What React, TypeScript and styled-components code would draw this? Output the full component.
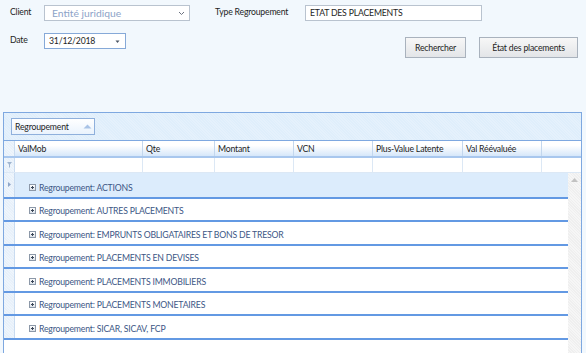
import React from "react";
import styled, { createGlobalStyle } from "styled-components";

const GlobalStyle = createGlobalStyle`
  html, body {
    margin: 0;
    padding: 0;
    background: #f2f8fd;
    font-family: Lato, "Liberation Sans", Arial, sans-serif;
    font-size: 8.7px;
    letter-spacing: -0.2px;
    color: #1e1e1e;
    overflow: hidden;
  }
`;

const Page = styled.div`
  width: 586px;
  height: 353px;
  display: flex;
  flex-direction: column;
`;

const FormArea = styled.div`
  height: 112px;
  display: flex;
  flex-direction: column;
  gap: 12px;
  padding: 5px 8px 0 10px;
  box-sizing: border-box;
`;

const FormRow = styled.div`
  display: flex;
  align-items: flex-start;
`;

const Label = styled.div<{ $w: number; $ml?: number }>`
  width: ${(p) => p.$w}px;
  margin-left: ${(p) => p.$ml ?? 0}px;
  line-height: 14px;
  white-space: nowrap;
`;

const Field = styled.div<{ $w: number; $focus?: boolean }>`
  width: ${(p) => p.$w}px;
  height: 16px;
  box-sizing: border-box;
  border: 1px solid ${(p) => (p.$focus ? "#86a9d8" : "#b9c3cf")};
  background: #fff;
  display: flex;
  align-items: center;
  padding: 0 4px 0 4px;
  line-height: 14px;
  white-space: nowrap;
`;

const Placeholder = styled.span`
  flex: 1;
  color: #8da3c8;
  padding-left: 3px;
  font-size: 10.3px;
  letter-spacing: 0;
`;

const FieldText = styled.span`
  flex: 1;
`;

const Chevron = styled.svg`
  width: 7px;
  height: 5px;
`;

const Buttons = styled.div`
  margin-left: auto;
  margin-top: 4px;
  display: flex;
  gap: 13px;
`;

const Button = styled.button<{ $w: number }>`
  width: ${(p) => p.$w}px;
  height: 21px;
  border: 1px solid #a9b2bd;
  background: linear-gradient(#f7f7f7, #e3e5e8);
  font-family: inherit;
  font-size: inherit;
  letter-spacing: inherit;
  color: #1e1e1e;
  padding: 0;
`;

const Grid = styled.div`
  margin: 0 4px 0 3px;
  flex: 1;
  border: 1px solid #7ea8e0;
  border-bottom: none;
  background: #fff;
  display: flex;
  flex-direction: column;
  overflow: hidden;
`;

const GroupPanel = styled.div`
  height: 28px;
  background: repeating-linear-gradient(45deg, #dfeefb 0 1px, #e5f1fc 1px 2px);
  border-bottom: 1px solid #7ea8e0;
  padding: 5px 0 0 7px;
  box-sizing: border-box;
`;

const GroupChip = styled.div`
  width: 84px;
  height: 17px;
  box-sizing: border-box;
  border: 1px solid #8fb0dc;
  background: linear-gradient(#ffffff, #eaf3fd);
  display: flex;
  align-items: center;
  justify-content: space-between;
  padding: 0 2px 0 3px;
`;

const Row = styled.div`
  display: flex;
`;

const HeaderRow = styled(Row)`
  height: 15px;
  background: linear-gradient(#ffffff 30%, #d6e7fa);
  border-bottom: 2px solid #a8c7ee;
`;

const FilterRow = styled(Row)`
  height: 14px;
  border-bottom: 1px solid #dce8f5;
`;

const Indicator = styled.div`
  width: 10px;
  flex: none;
  border-right: 1px solid #c9dbf0;
  background: repeating-linear-gradient(45deg, #e7f0fa 0 1px, #eef5fc 1px 2px);
  display: flex;
  align-items: center;
  justify-content: center;
`;

const HeadCell = styled.div<{ $w: number; $head?: boolean }>`
  width: ${(p) => p.$w}px;
  flex: none;
  box-sizing: border-box;
  border-right: 1px solid ${(p) => (p.$head ? "#c3d7ee" : "#dce8f5")};
  padding-left: 3px;
  line-height: 16px;
  white-space: nowrap;
`;

const Body = styled.div`
  flex: 1;
  display: flex;
`;

const Rows = styled.div`
  flex: 1;
  display: flex;
  flex-direction: column;
`;

const GroupRow = styled.div<{ $first?: boolean }>`
  height: ${(p) => (p.$first ? 25.5 : 23.5)}px;
  box-sizing: border-box;
  display: flex;
  border-bottom: 2px solid #6399e3;
`;

const GroupCell = styled.div<{ $active?: boolean }>`
  flex: 1;
  display: flex;
  align-items: flex-end;
  padding: 0 0 2px 14px;
  background: ${(p) => (p.$active ? "#dcecfc" : "#fff")};
  color: #3d5785;
  gap: 3px;
  line-height: 14px;
  white-space: nowrap;
`;

const PlusBox = styled.span`
  width: 7px;
  height: 7px;
  flex: none;
  box-sizing: border-box;
  border: 1px solid #8c98a8;
  background: linear-gradient(#fdfdfd, #dde3ea);
  margin-bottom: 4px;
  position: relative;
  &::before,
  &::after {
    content: "";
    position: absolute;
    background: #3a4658;
  }
  &::before {
    left: 1px;
    top: 2px;
    width: 3px;
    height: 1px;
  }
  &::after {
    left: 2px;
    top: 1px;
    width: 1px;
    height: 3px;
  }
`;

const Scrollbar = styled.div`
  width: 13px;
  flex: none;
  background: repeating-linear-gradient(45deg, #efefef 0 1px, #f6f6f6 1px 2px);
  display: flex;
  justify-content: center;
  padding-top: 5px;
  box-sizing: border-box;
`;

const columns = [
  { name: "ValMob", w: 128 },
  { name: "Qte", w: 72 },
  { name: "Montant", w: 79 },
  { name: "VCN", w: 79 },
  { name: "Plus-Value Latente", w: 90 },
  { name: "Val Réévaluée", w: 79 },
  { name: "", w: 52 },
];

const groups = [
  "ACTIONS",
  "AUTRES PLACEMENTS",
  "EMPRUNTS OBLIGATAIRES ET BONS DE TRESOR",
  "PLACEMENTS EN DEVISES",
  "PLACEMENTS IMMOBILIERS",
  "PLACEMENTS MONETAIRES",
  "SICAR, SICAV, FCP",
];

export default function App() {
  return (
    <Page>
      <GlobalStyle />
      <FormArea>
        <FormRow>
          <Label $w={34}>Client</Label>
          <Field $w={146}>
            <Placeholder>Entité juridique</Placeholder>
            <Chevron viewBox="0 0 7 5">
              <path d="M1 1l2.5 2.5L6 1" fill="none" stroke="#6b7280" strokeWidth="1" />
            </Chevron>
          </Field>
          <Label $w={90} $ml={25}>Type Regroupement</Label>
          <Field $w={177}>
            <FieldText>ETAT DES PLACEMENTS</FieldText>
          </Field>
        </FormRow>
        <FormRow>
          <Label $w={34}>Date</Label>
          <Field $w={82} $focus>
            <FieldText>31/12/2018</FieldText>
            <Chevron viewBox="0 0 7 5">
              <path d="M1.5 1.5h4L3.5 4z" fill="#4b5563" />
            </Chevron>
          </Field>
          <Buttons>
            <Button $w={61}>Rechercher</Button>
            <Button $w={99}>État des placements</Button>
          </Buttons>
        </FormRow>
      </FormArea>
      <Grid>
        <GroupPanel>
          <GroupChip>
            <span>Regroupement</span>
            <svg width="9" height="5" viewBox="0 0 9 5">
              <path d="M0.5 4.5L4.5 0.5L8.5 4.5z" fill="#a9c3e6" />
            </svg>
          </GroupChip>
        </GroupPanel>
        <HeaderRow>
          <Indicator />
          {columns.map((c, i) => (
            <HeadCell key={i} $w={c.w} $head>
              {c.name}
            </HeadCell>
          ))}
        </HeaderRow>
        <FilterRow>
          <Indicator>
            <svg width="5" height="6" viewBox="0 0 5 6">
              <path d="M0 0h5L3 2.5V6L2 5V2.5z" fill="#9fb4cf" />
            </svg>
          </Indicator>
          {columns.map((c, i) => (
            <HeadCell key={i} $w={c.w} />
          ))}
        </FilterRow>
        <Body>
          <Rows>
            {groups.map((g, i) => (
              <GroupRow key={g} $first={i === 0}>
                <Indicator>
                  {i === 0 && (
                    <svg width="3" height="5" viewBox="0 0 3 5">
                      <path d="M0 0l3 2.5L0 5z" fill="#8ea6c8" />
                    </svg>
                  )}
                </Indicator>
                <GroupCell $active={i === 0}>
                  <PlusBox />
                  <span>Regroupement: {g}</span>
                </GroupCell>
              </GroupRow>
            ))}
          </Rows>
          <Scrollbar>
            <svg width="7" height="4" viewBox="0 0 7 4">
              <path d="M0 4L3.5 0L7 4z" fill="#c2c2c2" />
            </svg>
          </Scrollbar>
        </Body>
      </Grid>
    </Page>
  );
}
